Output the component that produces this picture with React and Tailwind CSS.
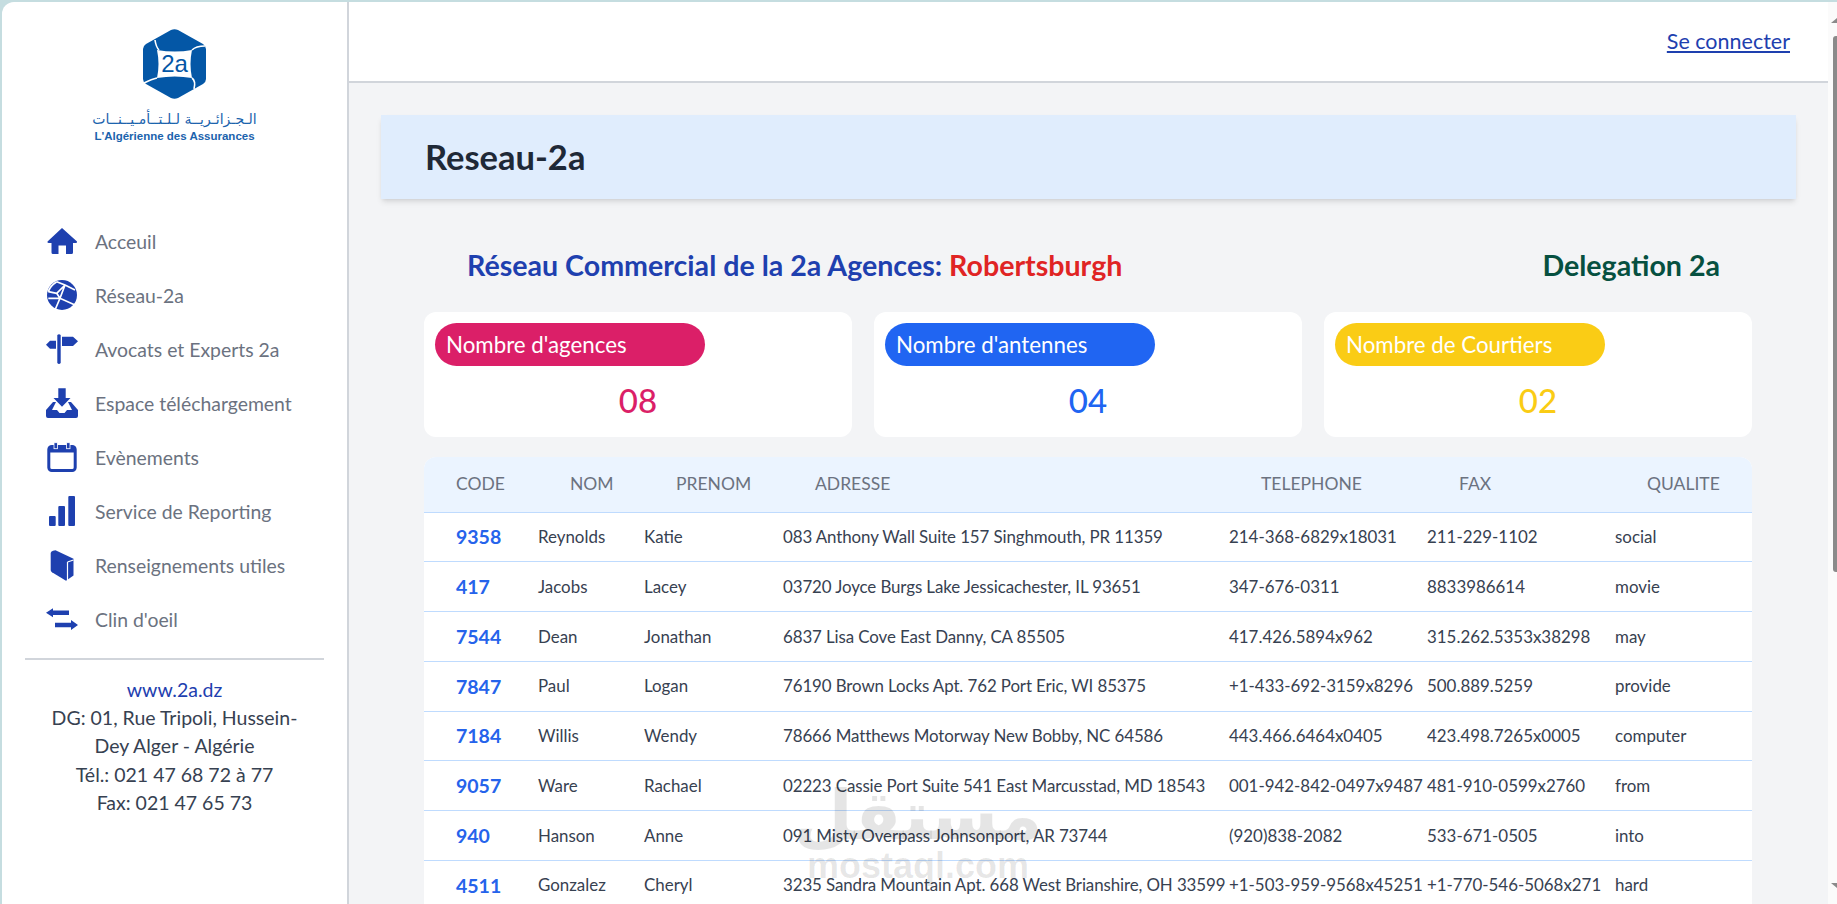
import React from "react";

const NAV_ICONS = {
	home: (
		<path d="M16 2 L31 15.5 Q31.5 17 29.5 17 L27 17 L27 26.5 Q27 28 25.5 28 L20 28 L20 19.5 L12.5 19.5 L12.5 28 L7 28 Q5.5 28 5.5 26.5 L5.5 17 L3 17 Q1 17 1.5 15.5 Z" />
	),
	globe: (
		<>
			<circle cx="16" cy="15" r="15" />
			<path
				d="M10.7 1.7 Q4 6 2.3 11.7 M10.7 1.7 L19 5 L29 10 M2.3 18.3 L14 18.3 L29 25 M19 5 L14 18.3 L9 30 M10.7 13.3 L19 5 M10.7 13.3 L14 18.3 M10.7 13.3 L2.3 11.7"
				fill="none"
				stroke="white"
				strokeWidth="1.7"
			/>
		</>
	),
	sign: (
		<path d="M11.3 1 Q13 -0.5 14.7 1 V29 Q13 31 11.3 29 Z M10 6.7 V14.7 H4 L0 10.7 L4 6.7 Z M16 2.7 H27 L32 7.3 L27 12 H16 Z" />
	),
	download: (
		<path d="M12.3 0.3 H19.7 V10 H24.5 L16 18.7 L7.5 10 H12.3 Z M7 14 H10 L6 22 H11 L13.5 25 H18.5 L21 22 H26 L22 14 H25 L32 22 V28 Q32 30 30 30 H2 Q0 30 0 28 V22 Z" />
	),
	calendar: (
		<>
			<rect x="2.8" y="4.5" width="26.4" height="24" rx="3" fill="none" stroke="#1e40af" strokeWidth="3" />
			<rect x="2.8" y="4.5" width="26.4" height="6" />
			<rect x="8" y="0.7" width="3.4" height="6" stroke="white" strokeWidth="0.8" />
			<rect x="20.6" y="0.7" width="3.4" height="6" stroke="white" strokeWidth="0.8" />
		</>
	),
	bars: (
		<>
			<rect x="3" y="20" width="6.7" height="10" rx="1" />
			<rect x="12.3" y="10" width="6.7" height="20" rx="1" />
			<rect x="22.3" y="0" width="6.7" height="30" rx="1" />
		</>
	),
	book: (
		<>
			<path d="M4.7 3 Q4.7 1.5 7 0.8 L9.5 0.3 L27.5 8.8 V25.5 L20 30.7 L6 22.2 Q4.7 21.2 4.7 20 Z" />
			<path d="M21.5 12 V30 M21.5 12 L27.5 10" fill="none" stroke="white" strokeWidth="1.2" />
		</>
	),
	exchange: (
		<path d="M0 8.7 L7 4.3 V6.5 H23 V11 H7 V13.3 Z M32 21 L25 16 V18.7 H9 V23.3 H25 V26 Z" />
	),
};

const NAV_ITEMS = [
	{ label: "Acceuil", icon: "home" },
	{ label: "Réseau-2a", icon: "globe" },
	{ label: "Avocats et Experts 2a", icon: "sign" },
	{ label: "Espace téléchargement", icon: "download" },
	{ label: "Evènements", icon: "calendar" },
	{ label: "Service de Reporting", icon: "bars" },
	{ label: "Renseignements utiles", icon: "book" },
	{ label: "Clin d'oeil", icon: "exchange" },
];

const STATS = [
	{ label: "Nombre d'agences", value: "08", pill: "bg-[#db1f68]", text: "text-[#db1f68]" },
	{ label: "Nombre d'antennes", value: "04", pill: "bg-[#2065f2]", text: "text-[#2065f2]" },
	{ label: "Nombre de Courtiers", value: "02", pill: "bg-[#facc15]", text: "text-[#facc15]" },
];

const AGENTS = [
	["9358", "Reynolds", "Katie", "083 Anthony Wall Suite 157 Singhmouth, PR 11359", "214-368-6829x18031", "211-229-1102", "social"],
	["417", "Jacobs", "Lacey", "03720 Joyce Burgs Lake Jessicachester, IL 93651", "347-676-0311", "8833986614", "movie"],
	["7544", "Dean", "Jonathan", "6837 Lisa Cove East Danny, CA 85505", "417.426.5894x962", "315.262.5353x38298", "may"],
	["7847", "Paul", "Logan", "76190 Brown Locks Apt. 762 Port Eric, WI 85375", "+1-433-692-3159x8296", "500.889.5259", "provide"],
	["7184", "Willis", "Wendy", "78666 Matthews Motorway New Bobby, NC 64586", "443.466.6464x0405", "423.498.7265x0005", "computer"],
	["9057", "Ware", "Rachael", "02223 Cassie Port Suite 541 East Marcusstad, MD 18543", "001-942-842-0497x9487", "481-910-0599x2760", "from"],
	["940", "Hanson", "Anne", "091 Misty Overpass Johnsonport, AR 73744", "(920)838-2082", "533-671-0505", "into"],
	["4511", "Gonzalez", "Cheryl", "3235 Sandra Mountain Apt. 668 West Brianshire, OH 33599", "+1-503-959-9568x45251", "+1-770-546-5068x271", "hard"],
];

const HEADERS = ["CODE", "NOM", "PRENOM", "ADRESSE", "TELEPHONE", "FAX", "QUALITE"];

function Logo() {
	return (
		<div className="flex flex-col items-center">
			<div className="relative h-[70px] w-[63px]">
				<svg viewBox="0 0 63 70" className="h-full w-full">
					<path
						d="M28 1 Q31.5 -0.5 35 1 L60 15 Q63 17 63 20 V50 Q63 53 60 55 L35 69 Q31.5 70.5 28 69 L3 55 Q0 53 0 50 V20 Q0 17 3 15 Z"
						fill="#0457a6"
					/>
					<path d="M14 21 Q32 24 49 21 Q46 35 49 49 Q32 46 14 49 Q17 35 14 21 Z" fill="white" />
					<path
						d="M12 11 Q13 18 16 21 M49 21 Q53 17 62 17 M49 49 Q53 52 51 60 M14 49 Q9 50 1 54"
						fill="none"
						stroke="white"
						strokeWidth="1.6"
					/>
				</svg>
				<span className="absolute inset-0 flex items-center justify-center font-['Liberation_Sans',sans-serif] text-[24px] leading-none text-[#0457a6]">
					2a
				</span>
			</div>
			<div
				dir="rtl"
				className="mt-[10px] font-['DejaVu_Sans',sans-serif] text-[14px] leading-5 text-[#1b63ad]"
			>
				الـجـزائـريــة لـلـتــأمـيــنــات
			</div>
			<div className="font-['Liberation_Sans',sans-serif] text-[11.5px] leading-[14px] font-bold text-[#1b63ad]">
				L'Algérienne des Assurances
			</div>
		</div>
	);
}

function Sidebar() {
	return (
		<aside className="flex w-[347px] shrink-0 flex-col rounded-tl-[12px] border-r-2 border-[#d1d5db] bg-white pt-[27px]">
			<Logo />
			<nav className="mt-[72px] flex flex-col">
				{NAV_ITEMS.map((item) => (
					<a key={item.label} className="flex h-[54px] items-center gap-[17px] pl-[44px] text-[19.4px] text-[#6b7280]">
						<svg viewBox="0 0 32 32" className="h-8 w-8 shrink-0" fill="#1e40af">
							{NAV_ICONS[item.icon]}
						</svg>
						{item.label}
					</a>
				))}
			</nav>
			<div className="mx-[23px] mt-[11px] h-[2px] bg-[#d1d5db]" />
			<div className="px-[40px] pt-[16px] text-center text-[19.5px] leading-[28.2px] text-[#374151]">
				<div className="text-[#1e40af]">www.2a.dz</div>
				<div>DG: 01, Rue Tripoli, Hussein-Dey Alger - Algérie</div>
				<div>Tél.: 021 47 68 72 à 77</div>
				<div>Fax: 021 47 65 73</div>
			</div>
		</aside>
	);
}

function StatCard({ stat }) {
	return (
		<div className="h-[125px] rounded-xl bg-white p-[11px]">
			<div className={`flex h-[43px] w-[270px] items-center rounded-full px-[11px] text-[22.3px] text-white ${stat.pill}`}>
				{stat.label}
			</div>
			<div className={`mt-[16px] text-center text-[33px] leading-[36px] font-medium ${stat.text}`}>{stat.value}</div>
		</div>
	);
}

function AgentsTable() {
	return (
		<div className="mt-[20px] rounded-t-xl bg-white">
			<table className="w-full table-fixed border-collapse text-left text-[16.9px] text-[#374151]">
				<colgroup>
					<col className="w-[114px]" />
					<col className="w-[106px]" />
					<col className="w-[139px]" />
					<col className="w-[446px]" />
					<col className="w-[198px]" />
					<col className="w-[188px]" />
					<col />
				</colgroup>
				<thead>
					<tr className="h-[55px] border-b border-[#bfdbfe] bg-[#ebf4ff]">
						{HEADERS.map((h, i) => (
							<th
								key={h}
								className={`pl-[32px] text-[17.5px] font-normal text-[#6b7280] ${i === 0 ? "rounded-tl-xl" : ""} ${i === 6 ? "rounded-tr-xl" : ""}`}
							>
								{h}
							</th>
						))}
					</tr>
				</thead>
				<tbody>
					{AGENTS.map((row) => (
						<tr key={row[0]} className="h-[49.75px] border-b border-[#bfdbfe]">
							{row.map((cell, i) => {
								if (i === 0) {
									return (
										<td key={i} className="pl-[32px] text-[19.5px] font-bold text-[#2563eb]">
											{cell}
										</td>
									);
								}
								return (
									<td key={i} className={`whitespace-nowrap ${i === 3 ? "tracking-[-0.1px]" : ""}`}>
										{cell}
									</td>
								);
							})}
						</tr>
					))}
				</tbody>
			</table>
		</div>
	);
}

function Scrollbar() {
	return (
		<div className="flex w-[9px] shrink-0 flex-col items-end bg-[#fbfbfb]">
			<svg viewBox="0 0 6 5" className="mt-[16px] h-[5px] w-[6px]" fill="#8a8a8a">
				<path d="M0 5 L6 5 L6 0 Z" />
			</svg>
			<div className="mt-[13px] h-[536px] w-[4px] rounded-l-[3px] bg-[#8a8a8a]" />
			<svg viewBox="0 0 6 5" className="mt-[311px] h-[5px] w-[6px]" fill="#8a8a8a">
				<path d="M0 0 L6 0 L6 5 Z" />
			</svg>
		</div>
	);
}

export default function App() {
	return (
		<div className="relative flex h-screen flex-col overflow-hidden bg-[#c5dde0] pt-[2px] pl-[2px] font-['Lato',sans-serif]">
			<div className="flex min-h-0 flex-1">
				<Sidebar />
				<div className="flex min-w-0 flex-1 flex-col bg-[#f3f4f6]">
					<header className="flex h-[81px] shrink-0 items-center justify-end border-b-2 border-[#d1d5db] bg-white pr-[38px]">
						<a className="text-[21.5px] text-[#1e40af] underline">Se connecter</a>
					</header>
					<main className="px-[32px] pt-[32px]">
						<div className="flex h-[84px] items-center bg-[#e0edfd] pl-[44px] text-[34.5px] font-bold text-[#1f2937] shadow-md">
							Reseau-2a
						</div>
						<div className="pr-[44px] pl-[43px]">
							<div className="mt-[50px] flex h-[32px] items-center justify-between pr-[32px] pl-[43px] text-[28.6px] font-bold">
								<h2 className="text-[#1e40af]">
									Réseau Commercial de la 2a Agences: <span className="text-[#e02424]">Robertsburgh</span>
								</h2>
								<h2 className="text-[#065040]">Delegation 2a</h2>
							</div>
							<div className="mt-[31px] grid grid-cols-3 gap-[22px]">
								{STATS.map((stat) => (
									<StatCard key={stat.label} stat={stat} />
								))}
							</div>
							<AgentsTable />
						</div>
					</main>
				</div>
				<Scrollbar />
			</div>
			<div className="pointer-events-none absolute top-[786px] left-[808px] flex w-[220px] flex-col items-center text-black/10">
				<span className="font-['DejaVu_Sans',sans-serif] text-[68px] leading-[60px] font-bold">مستقل</span>
				<span className="font-['Liberation_Sans',sans-serif] text-[36px] leading-[40px] font-bold">mostaql.com</span>
			</div>
		</div>
	);
}
